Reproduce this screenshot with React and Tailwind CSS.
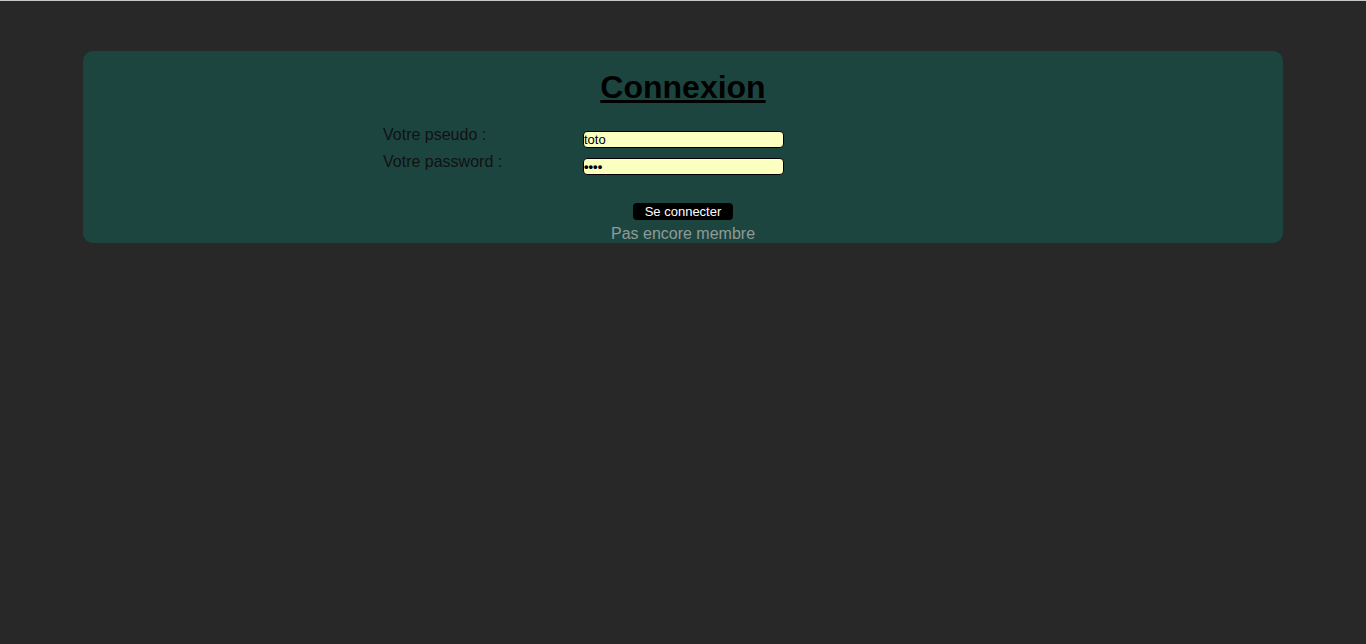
export default function App() {
  return (
    <div className="min-h-[644px] w-full bg-[#272827] border-t border-[#c8c8c8]" style={{ fontFamily: '"Liberation Sans", Arial, sans-serif' }}>
      <div className="pt-[50px] flex justify-center">
        <div className="w-[1200px] h-[192px] rounded-[10px] bg-[#1d4540] flex flex-col items-center pt-[18px]">
          <h1 className="text-[32px] leading-[37px] font-bold underline text-black">Connexion</h1>
          <div className="mt-[20px] w-[600px] grid grid-cols-[200px_200px_200px]">
            <div className="h-[27px] text-[16px] leading-[18px] text-[#111]">Votre pseudo :</div>
            <div className="h-[27px] pt-[5px]">
              <div className="h-[17px] w-[201px] rounded-[4px] border border-black bg-[#fbffc0] text-[13px] leading-[15px] text-black">toto</div>
            </div>
            <div />
            <div className="h-[27px] text-[16px] leading-[18px] text-[#111]">Votre password :</div>
            <div className="h-[27px] pt-[5px]">
              <div className="h-[17px] w-[201px] rounded-[4px] border border-black bg-[#fbffc0] text-[13px] leading-[15px] font-bold text-black">••••</div>
            </div>
            <div />
          </div>
          <div className="mt-[23px] w-[100px] h-[17px] rounded-[4px] bg-black text-white text-[13px] leading-[17px] text-center">Se connecter</div>
          <div className="mt-[5px] text-[16px] leading-[18px] text-[#8d9b99]">Pas encore membre</div>
        </div>
      </div>
    </div>
  );
}
